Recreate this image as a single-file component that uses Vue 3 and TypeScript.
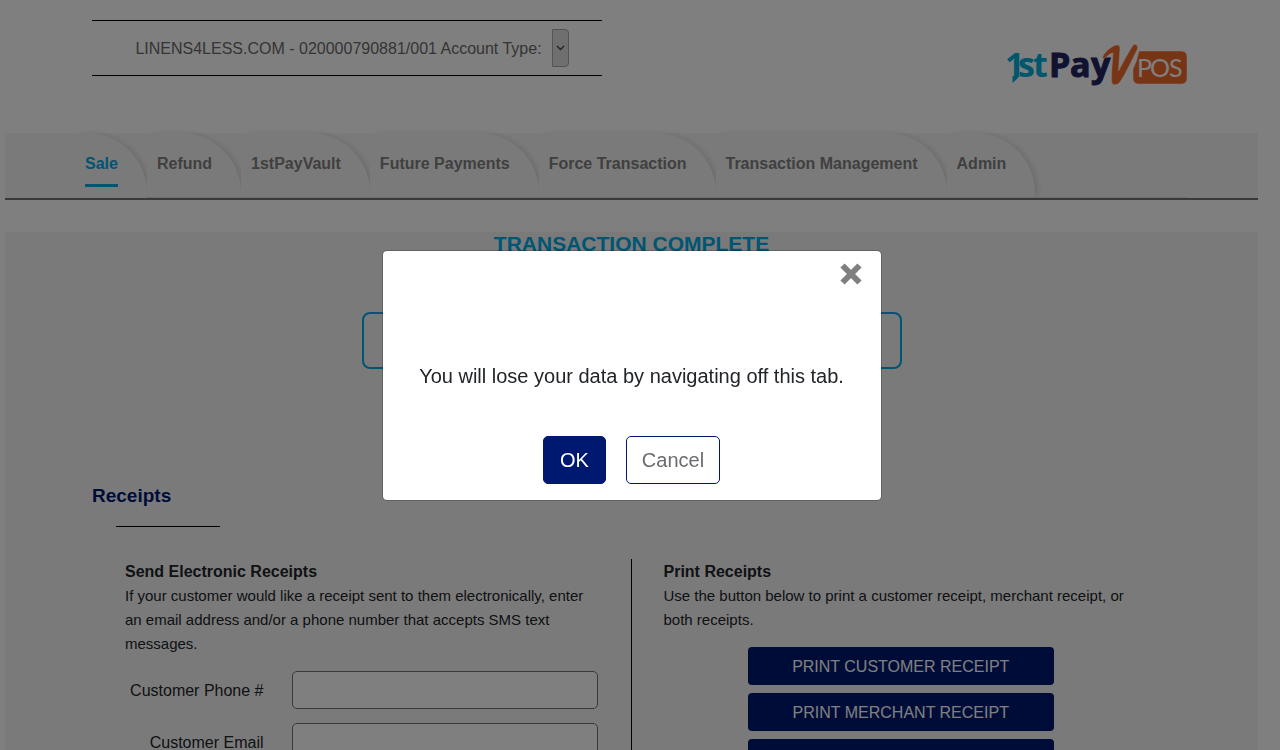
<script setup lang="ts">
import { ref } from 'vue'

const tabs: string[] = [
  'Sale',
  'Refund',
  '1stPayVault',
  'Future Payments',
  'Force Transaction',
  'Transaction Management',
  'Admin',
]
const activeTab = ref('Sale')
const dialogOpen = ref(true)
const phone = ref('')
const email = ref('')
const printActions: string[] = ['PRINT CUSTOMER RECEIPT', 'PRINT MERCHANT RECEIPT', 'PRINT BOTH RECEIPTS']
</script>

<template>
  <div class="app">
    <header class="header">
      <div class="account">
        <label for="account-type">LINENS4LESS.COM - 020000790881/001 Account Type:</label>
        <span class="select-wrap">
          <select id="account-type"></select>
          <svg class="caret" viewBox="0 0 9 6" aria-hidden="true"><path d="M1 1l3.500 3.500L8 1" /></svg>
        </span>
      </div>
      <svg class="logo" viewBox="0 0 180 41" role="img" aria-label="1stPay VPOS">
        <text class="logo-first" x="-2 11 26" y="33">1st</text>
        <path class="logo-tail" d="M5.500 32H11V34L5.500 39Z" />
        <text class="logo-pay" x="42 63 84" y="33">Pay</text>
        <path
          class="logo-orange"
          d="M132 7H174Q180 7 180 13V34Q180 40 174 40H132Q126 40 126 34V25Q130 17 132 7Z"
        />
        <path
          class="logo-orange"
          d="M96 12C100 5 107 1 110 1C114 1 113 5 112.500 11L111.500 27C115 20 121 9 125.500 2C127 0 128 0 129.500 1C131 2 131 4 130 6C124 18 119 29 113 38C111 41 106 42 105 39C104 36 105 22 106 9C103 9 101 12 98 14C96 15 95 14 96 12Z"
        />
        <text class="logo-pos" x="130 143 162" y="33">POS</text>
      </svg>
    </header>

    <nav class="nav">
      <ul class="tabs">
        <li v-for="tab in tabs" :key="tab" class="tab" :class="{ active: tab === activeTab }">
          <a href="#" @click.prevent="activeTab = tab">{{ tab }}</a>
        </li>
      </ul>
    </nav>

    <main class="panel">
      <h1 class="title">TRANSACTION COMPLETE</h1>
      <div class="summary"></div>
      <h2 class="section-title">Receipts</h2>
      <hr class="rule" />
      <div class="columns">
        <section class="column email">
          <h3>Send Electronic Receipts</h3>
          <p>
            If your customer would like a receipt sent to them electronically, enter an email address and/or a phone
            number that accepts SMS text messages.
          </p>
          <div class="field">
            <label for="phone">Customer Phone #</label>
            <input id="phone" v-model="phone" type="tel" />
          </div>
          <div class="field">
            <label for="email">Customer Email</label>
            <input id="email" v-model="email" type="email" />
          </div>
        </section>
        <section class="column print">
          <h3>Print Receipts</h3>
          <p>Use the button below to print a customer receipt, merchant receipt, or both receipts.</p>
          <div class="actions">
            <button v-for="action in printActions" :key="action" type="button">{{ action }}</button>
          </div>
        </section>
      </div>
    </main>

    <div v-if="dialogOpen" class="overlay">
      <div class="dialog" role="dialog" aria-modal="true" aria-labelledby="dialog-message">
        <button class="close" type="button" aria-label="Close" @click="dialogOpen = false">
          <svg viewBox="0 0 22 22" aria-hidden="true"><path d="M2.500 2.500l17 17M19.500 2.500l-17 17" /></svg>
        </button>
        <p id="dialog-message" class="message">You will lose your data by navigating off this tab.</p>
        <div class="dialog-actions">
          <button class="btn primary" type="button" @click="dialogOpen = false">OK</button>
          <button class="btn" type="button" @click="dialogOpen = false">Cancel</button>
        </div>
      </div>
    </div>
  </div>
</template>

<style>
body {
  margin: 0;
  background: #fff;
}
</style>

<style scoped>
* {
  box-sizing: border-box;
}
.app {
  height: 100vh;
  overflow: hidden;
  padding: 0 22px 0 5px;
  font: 16px/24px "Liberation Sans", Arial, sans-serif;
  color: #212529;
}
h1,
h2,
h3,
p {
  margin: 0;
}
button,
input,
select {
  font: inherit;
}
.header {
  display: flex;
  justify-content: space-between;
  align-items: flex-start;
  padding: 20px 71px 0 87px;
  height: 133px;
}
.account {
  display: flex;
  align-items: center;
  justify-content: center;
  gap: 10px;
  width: 510px;
  height: 56px;
  padding-left: 10px;
  border-top: 1px solid #000;
  border-bottom: 1px solid #000;
  color: #6a6a6a;
}
.account label {
  padding-top: 2px;
}
.select-wrap {
  position: relative;
  display: flex;
}
select {
  appearance: none;
  width: 17px;
  height: 38px;
  padding: 0;
  border: 1px solid #a8a8a8;
  border-radius: 0 4px 4px 0;
  background: #dfdfdf;
}
.caret {
  position: absolute;
  left: 4px;
  top: 16px;
  width: 9px;
  height: 6px;
  fill: none;
  stroke: #444;
  stroke-width: 1.3;
  pointer-events: none;
}
.logo {
  width: 180px;
  height: 41px;
  margin-top: 24px;
  overflow: visible;
}
.logo text {
  font-family: "Open Sans", sans-serif;
  font-weight: 700;
  font-size: 34px;
}
.logo .logo-first,
.logo-tail {
  fill: #00aed8;
}
.logo .logo-pay {
  fill: #222460;
  stroke: #222460;
  stroke-width: 1;
}
.logo-orange {
  fill: #f06a2b;
  stroke: #fff;
  stroke-width: 0.5;
}
.logo .logo-pos {
  font-family: Lato, sans-serif;
  font-weight: 400;
  font-size: 25px;
  fill: #fff;
}
.nav {
  padding: 0 71px 0 70px;
  background: #f5f5f5;
  border-bottom: 2px solid #727272;
}
.tabs {
  display: flex;
  height: 65px;
  margin: 0;
  padding: 0;
  list-style: none;
  border-bottom: 1px solid #dcdcdc;
}
.tab {
  height: 64px;
  padding: 19px 29px 0 10px;
  background: #f5f5f5;
  border-radius: 0 60px 0 0;
  box-shadow: 4px 0 6px -1px rgba(0, 0, 0, 0.12);
  clip-path: inset(-4px -10px 0 0);
}
.tab.active {
  height: 65px;
}
.tab a {
  display: block;
  height: 35px;
  font-weight: 700;
  color: #808080;
  text-decoration: none;
  white-space: nowrap;
}
.tab.active a {
  color: #00aae6;
  border-bottom: 3px solid #00aae6;
}
.panel {
  margin-top: 32px;
  padding: 0 87px 40px;
  background: #f5f5f5;
}
.title {
  text-align: center;
  font-size: 21px;
  line-height: 24px;
  color: #00aae6;
}
.summary {
  width: 540px;
  height: 57px;
  margin: 56px auto 0;
  border: 2px solid #00aae6;
  border-radius: 8px;
}
.section-title {
  margin-top: 115px;
  font-size: 19px;
  line-height: 24px;
  color: #001970;
}
.rule {
  width: 104px;
  height: 1px;
  margin: 18px 0 0 24px;
  border: 0;
  background: #000;
}
.columns {
  display: grid;
  grid-template-columns: 1fr 1fr;
  margin-top: 32px;
}
.column {
  padding: 1px 33px 0;
  min-height: 230px;
}
.column.email {
  border-right: 1px solid #000;
}
.column.print {
  padding-left: 32px;
}
.column h3 {
  font-size: 16px;
  line-height: 24px;
}
.column p {
  font-size: 15px;
}
.field {
  display: flex;
  align-items: center;
  justify-content: flex-end;
  gap: 28px;
  margin-top: 14px;
}
p + .field {
  margin-top: 15px;
}
.field label {
  padding-top: 1px;
}
.field input {
  width: 306px;
  height: 38px;
  padding: 6px 12px;
  border: 1px solid #727272;
  border-radius: 5px;
  background: #fff;
}
.actions {
  display: flex;
  flex-direction: column;
  align-items: center;
  gap: 8px;
  margin-top: 15px;
}
.actions button {
  width: 306px;
  height: 38px;
  padding: 2px 0 0;
  border: 0;
  border-radius: 4px;
  background: #001970;
  color: #fff;
}
.overlay {
  position: fixed;
  inset: 0;
  display: flex;
  align-items: center;
  justify-content: center;
  padding-right: 17px;
  background: rgba(0, 0, 0, 0.5);
}
.dialog {
  position: relative;
  width: 500px;
  padding: 111px 16px 16px;
  border: 1px solid rgba(0, 0, 0, 0.2);
  border-radius: 5px;
  background: #fff;
  background-clip: padding-box;
}
.close {
  position: absolute;
  top: 12px;
  right: 19px;
  padding: 0;
  border: 0;
  background: none;
}
.close svg {
  display: block;
  width: 22px;
  height: 22px;
  stroke: #7f7f7f;
  stroke-width: 6;
}
.message {
  text-align: center;
  font-size: 20px;
  line-height: 28px;
}
.dialog-actions {
  display: flex;
  justify-content: center;
  gap: 20px;
  margin-top: 46px;
}
.btn {
  height: 48px;
  padding: 0 15px;
  border: 1px solid #001970;
  border-radius: 5px;
  background: #fff;
  font-size: 20px;
  color: #6c6c70;
}
.btn.primary {
  padding: 0 16px;
  background: #001970;
  color: #fff;
}
</style>
